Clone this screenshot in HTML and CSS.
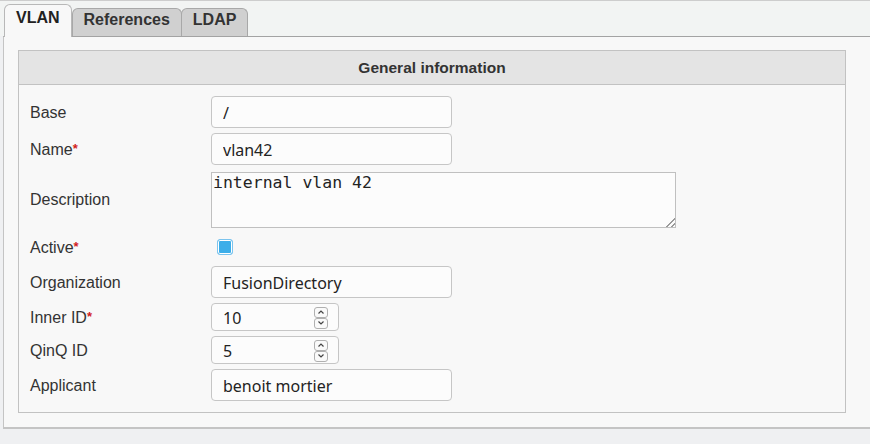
FILE: index.html
```html
<!DOCTYPE html>
<html lang="en">
<head>
<meta charset="utf-8">
<title>VLAN</title>
<link rel="stylesheet" href="styles.css">
</head>
<body>
<div class="tabs">
  <div class="tab active">VLAN</div>
  <div class="tab">References</div>
  <div class="tab">LDAP</div>
</div>
<div class="panel">
  <div class="box">
    <div class="box-head">General information</div>
    <div class="form">
      <label class="lbl">Base</label>
      <div class="cell"><input class="inp" type="text" value="/"></div>

      <label class="lbl">Name<span class="req">*</span></label>
      <div class="cell"><input class="inp" type="text" value="vlan42"></div>

      <label class="lbl">Description</label>
      <div class="cell"><textarea class="area">internal vlan 42</textarea></div>

      <label class="lbl">Active<span class="req">*</span></label>
      <div class="cell check-cell"><span class="check"></span></div>

      <label class="lbl">Organization</label>
      <div class="cell"><input class="inp" type="text" value="FusionDirectory"></div>

      <label class="lbl">Inner ID<span class="req">*</span></label>
      <div class="cell">
        <div class="spin">
          <span class="spin-val">10</span>
          <span class="spin-btns">
            <span class="sb"><svg width="8" height="6" viewBox="0 0 8 6"><path d="M1.5 4.5 L4 2 L6.5 4.5" fill="none" stroke="#444" stroke-width="1.2"/></svg></span>
            <span class="sb"><svg width="8" height="6" viewBox="0 0 8 6"><path d="M1.5 1.5 L4 4 L6.5 1.5" fill="none" stroke="#444" stroke-width="1.2"/></svg></span>
          </span>
        </div>
      </div>

      <label class="lbl">QinQ ID</label>
      <div class="cell">
        <div class="spin">
          <span class="spin-val">5</span>
          <span class="spin-btns">
            <span class="sb"><svg width="8" height="6" viewBox="0 0 8 6"><path d="M1.5 4.5 L4 2 L6.5 4.5" fill="none" stroke="#444" stroke-width="1.2"/></svg></span>
            <span class="sb"><svg width="8" height="6" viewBox="0 0 8 6"><path d="M1.5 1.5 L4 4 L6.5 1.5" fill="none" stroke="#444" stroke-width="1.2"/></svg></span>
          </span>
        </div>
      </div>

      <label class="lbl">Applicant</label>
      <div class="cell"><input class="inp" type="text" value="benoit mortier"></div>
    </div>
  </div>
</div>
</body>
</html>
```

FILE: styles.css
```css
html, body {
  margin: 0;
  padding: 0;
}
body {
  background: #eff0f2;
  font-family: "Liberation Sans", Arial, sans-serif;
  color: #333;
}
.tabs {
  display: flex;
  align-items: flex-end;
  height: 36px;
  box-sizing: border-box;
  border-top: 1px solid #cdcdcd;
  background: #f2f4f3;
  padding-left: 4px;
}
.tab {
  box-sizing: border-box;
  height: 28px;
  padding: 2px 11px 0 11px;
  line-height: 18px;
  font-size: 16px;
  font-weight: bold;
  color: #333;
  background: #d0d0d0;
  border: 1px solid #a8a8a8;
  border-bottom: none;
  border-radius: 6px 6px 0 0;
}
.tab + .tab {
  margin-left: -1px;
}
.tab.active {
  height: 33px;
  padding: 4px 11px 0 11px;
  background: #f8f8f8;
  border-color: #b8b8b8;
  color: #222;
  margin-bottom: -1px;
  position: relative;
  z-index: 1;
}
.tab.active + .tab {
  margin-left: 0;
}
.panel {
  margin-left: 3px;
  background: #f8f8f8;
  border-top: 1px solid #a3a3a3;
  border-left: 1px solid #c4c4c4;
  border-bottom: 2px solid #c4c4c4;
  padding: 13px 24px 14px 14px;
}
.box {
  border: 1px solid #c2c2c2;
  background: #f8f8f8;
}
.box-head {
  height: 33px;
  line-height: 33px;
  background: #e4e4e4;
  border-bottom: 1px solid #c2c2c2;
  text-align: center;
  font-weight: bold;
  font-size: 15.5px;
  color: #333;
}
.form {
  display: grid;
  grid-template-columns: 181px 1fr;
  row-gap: 5px;
  align-items: center;
  padding: 11px 11px 11px 11px;
}
.lbl {
  font-size: 16px;
  color: #333;
  line-height: 20px;
  padding-top: 2px;
}
.req {
  color: #d21c1c;
  font-size: 13px;
  font-weight: bold;
  vertical-align: top;
  position: relative;
  top: -1px;
}
.cell {
  display: flex;
  align-items: center;
}
.inp {
  box-sizing: border-box;
  width: 241px;
  height: 32px;
  margin: 0;
  padding: 1px 11px 0 11px;
  border: 1px solid #c6c6c6;
  border-radius: 4px;
  background: #fcfcfc;
  font-family: "Noto Sans", "Open Sans", sans-serif;
  font-size: 16px;
  color: #232323;
  outline: none;
}
.area {
  box-sizing: border-box;
  width: 465px;
  height: 56px;
  margin: 2px 0 0 0;
  padding: 0 1px;
  border: 1px solid #c0c0c0;
  border-radius: 0;
  resize: none;
  font-family: "DejaVu Sans Mono", monospace;
  font-size: 16.5px;
  line-height: 20px;
  color: #232323;
  background:
    linear-gradient(135deg, #fcfcfc 50%, transparent 50%) right bottom / 12px 12px no-repeat,
    repeating-linear-gradient(135deg, #fcfcfc 0 1.5px, #9a9a9a 1.5px 3px) right bottom / 12px 12px no-repeat,
    #fcfcfc;
}
.check-cell {
  height: 28px;
}
.check {
  box-sizing: border-box;
  width: 16px;
  height: 16px;
  margin-left: 6px;
  border: 1px solid #7cc4ee;
  border-radius: 3px;
  background: #3daee9;
  box-shadow: inset 0 0 0 1px #ffffff;
}
.spin {
  box-sizing: border-box;
  width: 128px;
  height: 28px;
  display: flex;
  align-items: center;
  justify-content: space-between;
  padding: 1px 10px 0 11px;
  border: 1px solid #c6c6c6;
  border-radius: 4px;
  background: #fcfcfc;
  font-family: "Noto Sans", "Open Sans", sans-serif;
  font-size: 16px;
  color: #232323;
}
.spin-btns {
  display: flex;
  flex-direction: column;
}
.sb {
  box-sizing: border-box;
  width: 14px;
  height: 11px;
  display: flex;
  align-items: center;
  justify-content: center;
  border: 1px solid #b0b0b0;
  border-radius: 3px;
  background: #fafafa;
}
```
